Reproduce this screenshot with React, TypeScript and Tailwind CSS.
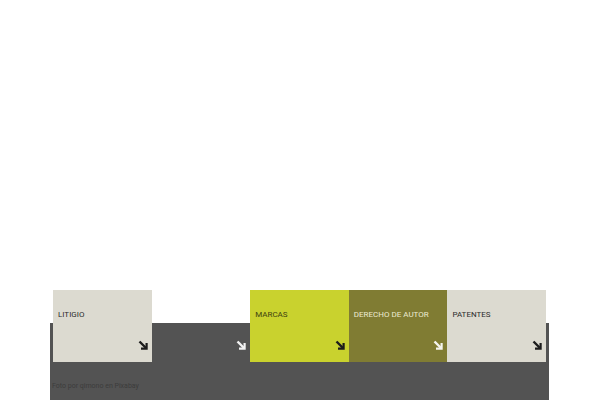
const cards = [
    { label: "LITIGIO", bg: "bg-[#dcdad0]", text: "text-[#2b2b2b]", arrow: "#1c1c1c" },
    { label: "", bg: "bg-transparent", text: "text-white", arrow: "#f2f2f2" },
    { label: "MARCAS", bg: "bg-[#c9d22e]", text: "text-[#3d4210]", arrow: "#1c1c1c" },
    { label: "DERECHO DE AUTOR", bg: "bg-[#807c33]", text: "text-[#ecebd2]", arrow: "#f4f4ee" },
    { label: "PATENTES", bg: "bg-[#dcdad0]", text: "text-[#2b2b2b]", arrow: "#1c1c1c" },
];

function Arrow({ color }: { color: string }) {
    return (
        <svg width="10" height="10" viewBox="0 0 10 10" fill="none">
            <path d="M1.5 1.5 L8 8" stroke={color} strokeWidth="2.4" />
            <path d="M3 8.6 H8.6 V3" stroke={color} strokeWidth="2.2" />
        </svg>
    );
}

export default function App() {
    return (
        <div className="w-[600px] h-[400px] overflow-hidden bg-white" style={{ fontFamily: "Roboto, 'Liberation Sans', sans-serif" }}>
            <div className="flex flex-col w-[499px] ml-[50px] mt-[323px] h-[120px] bg-[#535353] px-[3px]">
                <div className="grid grid-cols-5 -mt-[33px]">
                    {cards.map((c, i) => (
                        <div key={i} className={`h-[72px] flex flex-col justify-between pt-[20px] pl-[5px] pr-[4px] pb-[12px] ${c.bg}`}>
                            <span className={`text-[8px] leading-[10px] ${c.text}`}>{c.label}</span>
                            <div className="flex justify-end">
                                <Arrow color={c.arrow} />
                            </div>
                        </div>
                    ))}
                </div>
                <p className="mt-[20px] -ml-[1px] text-[7px] leading-[8px] text-[#3c3c3c]">Foto por qimono en Pixabay</p>
            </div>
        </div>
    );
}
